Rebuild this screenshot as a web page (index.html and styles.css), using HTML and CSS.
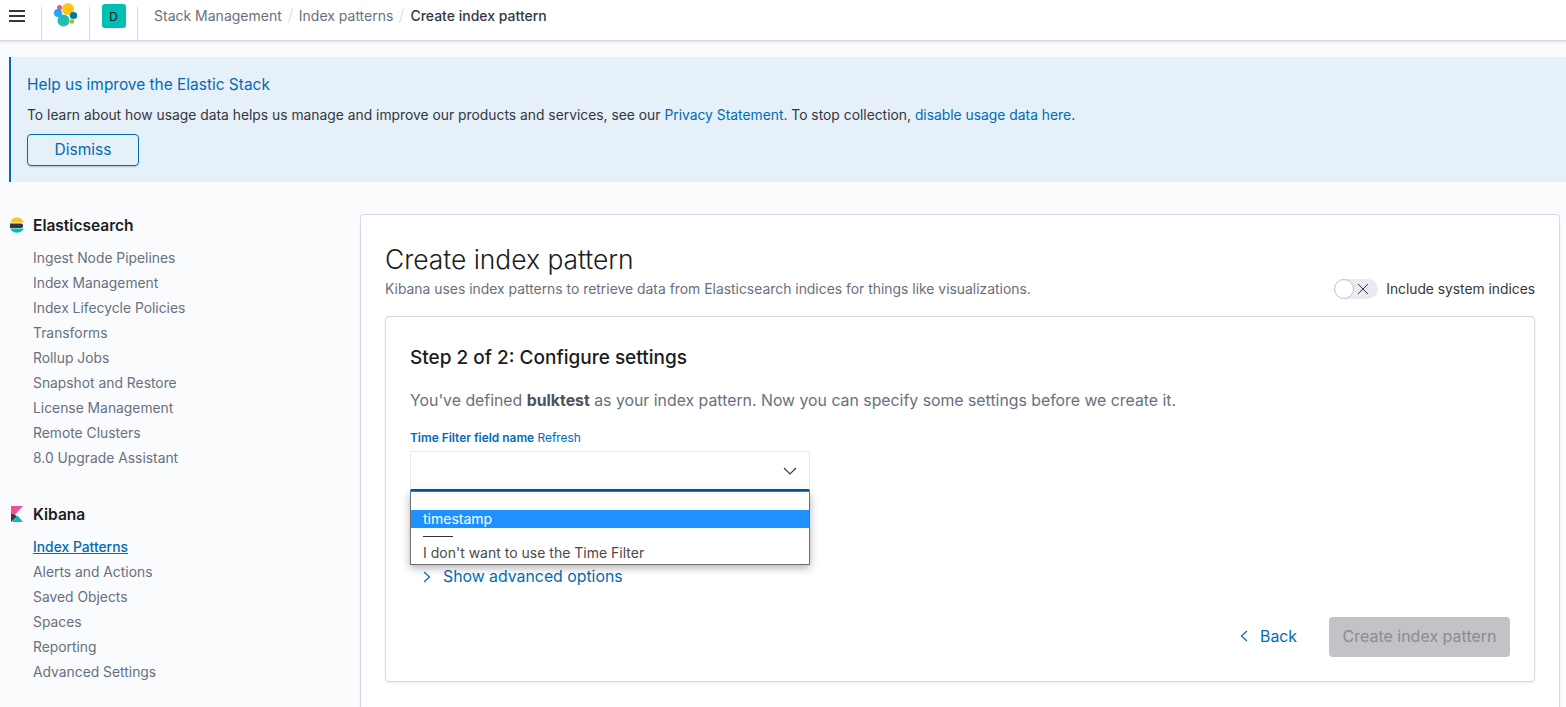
FILE: index.html

```html
<!DOCTYPE html>
<html lang="en">
<head>
    <meta charset="UTF-8">
    <title>Create index pattern - Kibana</title>
    <link rel="stylesheet" href="styles.css">
</head>
<body>
    <header class="topbar">
        <div class="topbar-cell menu-cell">
            <svg width="16" height="12" viewBox="0 0 16 12"><path d="M0 1h16M0 6h16M0 11h16" stroke="#343741" stroke-width="2"/></svg>
        </div>
        <div class="topbar-cell logo-cell">
            <svg width="26" height="26" viewBox="0 0 26 26">
                <circle cx="15" cy="7" r="6" fill="#fec514"/>
                <circle cx="10.500" cy="18.500" r="6" fill="#24bbb1"/>
                <ellipse cx="5" cy="11" rx="4" ry="4" fill="#1ba9f5"/>
                <ellipse cx="20.500" cy="13.500" rx="3.700" ry="3.500" fill="#0077a8"/>
                <circle cx="6.500" cy="5.500" r="2.500" fill="#f04e98"/>
                <circle cx="19" cy="19.500" r="2.300" fill="#93c90e"/>
            </svg>
        </div>
        <div class="topbar-cell space-cell"><span class="space-badge">D</span></div>
        <nav class="crumbs">
            <a>Stack Management</a><span class="crumb-sep"></span>
            <a>Index patterns</a><span class="crumb-sep"></span>
            <span class="crumb-current">Create index pattern</span>
        </nav>
    </header>

    <section class="callout">
        <h2>Help us improve the Elastic Stack</h2>
        <p>To learn about how usage data helps us manage and improve our products and services, see our <a>Privacy Statement</a>. To stop collection, <a>disable usage data here</a>.</p>
        <button class="btn-outline" type="button">Dismiss</button>
    </section>

    <div class="page">
        <aside class="sidenav">
            <h3 class="nav-title">
                <svg width="16" height="16" viewBox="0 0 16 16">
                    <path d="M1.500 5.500C2 2.500 5 .500 8 .500s6 2 6.500 5z" fill="#fec514"/>
                    <path d="M1 6.500h11a2.200 2.200 0 0 1 0 4.400H1z" fill="#343741"/>
                    <path d="M1.500 11.500h13C14 14 11 15.700 8 15.700s-6-1.700-6.500-4.200z" fill="#00bfb3"/>
                </svg>
                Elasticsearch
            </h3>
            <ul class="nav-list">
                <li>Ingest Node Pipelines</li>
                <li>Index Management</li>
                <li>Index Lifecycle Policies</li>
                <li>Transforms</li>
                <li>Rollup Jobs</li>
                <li>Snapshot and Restore</li>
                <li>License Management</li>
                <li>Remote Clusters</li>
                <li>8.0 Upgrade Assistant</li>
            </ul>
            <h3 class="nav-title">
                <svg width="16" height="16" viewBox="0 0 16 16">
                    <path d="M2 0h12L2 13z" fill="#f04e98"/>
                    <path d="M2 8c2.500 0 4.500 1 6 2.500L2 16z" fill="#343741"/>
                    <path d="M3 16 8.500 9.500 14 16z" fill="#00bfb3"/>
                </svg>
                Kibana
            </h3>
            <ul class="nav-list">
                <li class="active">Index Patterns</li>
                <li>Alerts and Actions</li>
                <li>Saved Objects</li>
                <li>Spaces</li>
                <li>Reporting</li>
                <li>Advanced Settings</li>
            </ul>
        </aside>

        <main class="panel">
            <div class="panel-head">
                <div>
                    <h1>Create index pattern</h1>
                    <p class="subtitle">Kibana uses index patterns to retrieve data from Elasticsearch indices for things like visualizations.</p>
                </div>
                <div class="switch-row">
                    <span class="switch">
                        <span class="switch-knob"></span>
                        <svg width="12" height="12" viewBox="0 0 12 12"><path d="M1 1l10 10M11 1 1 11" stroke="#343741" stroke-width="1"/></svg>
                    </span>
                    <span>Include system indices</span>
                </div>
            </div>

            <div class="card">
                <h2>Step 2 of 2: Configure settings</h2>
                <p class="lead">You've defined <b>bulktest</b> as your index pattern. Now you can specify some settings before we create it.</p>
                <div class="field-label"><b>Time Filter field name</b> <a>Refresh</a></div>
                <div class="select-wrap">
                    <div class="select">
                        <svg width="14" height="8" viewBox="0 0 14 8"><path d="M1 1l6 6 6-6" fill="none" stroke="#343741" stroke-width="1.100"/></svg>
                    </div>
                    <div class="dropdown">
                        <div class="opt-blank"></div>
                        <div class="opt selected">timestamp</div>
                        <div class="opt-divider"></div>
                        <div class="opt">I don't want to use the Time Filter</div>
                    </div>
                </div>
                <div class="advanced">
                    <svg width="8" height="12" viewBox="0 0 8 12"><path d="M1 1l5.500 5L1 11" fill="none" stroke="#006bb4" stroke-width="1.200"/></svg>
                    <a>Show advanced options</a>
                </div>
                <div class="actions">
                    <a class="back">
                        <svg width="8" height="12" viewBox="0 0 8 12"><path d="M7 1 1.500 6 7 11" fill="none" stroke="#006bb4" stroke-width="1.200"/></svg>
                        Back
                    </a>
                    <button class="btn-disabled" type="button" disabled>Create index pattern</button>
                </div>
            </div>
        </main>
    </div>
</body>
</html>
```

FILE: styles.css

```css
* {
    box-sizing: border-box;
}
html, body {
    height: 707px;
    overflow: hidden;
}
body {
    margin: 0;
    font-family: Inter, "Liberation Sans", sans-serif;
    font-size: 13.800px;
    color: #343741;
    background: #fafbfd;
}
a {
    color: #006bb4;
}
h1, h2, h3, p, ul {
    margin: 0;
    padding: 0;
}

/* top bar */
.topbar {
    height: 41px;
    display: flex;
    background: #fff;
    border-bottom: 1px solid #d3dae6;
    box-shadow: 0 1px 3px rgba(152, 162, 179, 0.3);
}
.topbar-cell {
    display: flex;
    justify-content: center;
}
.menu-cell {
    width: 41px;
    padding: 10px 0 0 9px;
    justify-content: flex-start;
    align-items: flex-start;
}
.logo-cell {
    width: 49px;
    padding-top: 2px;
    border-left: 1px solid #d3dae6;
    border-right: 1px solid #d3dae6;
    border-image: linear-gradient(to bottom, transparent 8px, #d3dae6 8px) 1;
    align-items: flex-start;
}
.space-cell {
    width: 48px;
    padding-top: 4px;
    border-right: 1px solid #d3dae6;
    border-image: linear-gradient(to bottom, transparent 8px, #d3dae6 8px) 1;
    align-items: flex-start;
}
.space-badge {
    width: 24px;
    height: 24px;
    border-radius: 3px;
    background: #00bfb3;
    color: #1a1c21;
    font-size: 12px;
    display: flex;
    align-items: center;
    justify-content: center;
}
.crumbs {
    display: flex;
    align-items: flex-start;
    padding: 7px 0 0 16px;
    font-size: 14px;
    line-height: 17px;
    color: #69707d;
}
.crumb-sep {
    width: 1px;
    height: 15px;
    margin: 1px 8px;
    background: #d3dae6;
    transform: rotate(15deg);
}
.crumb-current {
    color: #343741;
    font-weight: 500;
}
.crumbs a {
    color: #69707d;
}

/* usage data callout */
.callout {
    height: 125px;
    margin: 16px 0 0 9px;
    padding: 16px;
    background: #e6f0f8;
    border-left: 2px solid #006bb4;
}
.callout h2 {
    font-size: 15.450px;
    font-weight: 400;
    line-height: 24px;
    color: #006bb4;
}
.callout p {
    margin-top: 8px;
    font-size: 13.850px;
    line-height: 21px;
}
.btn-outline {
    display: block;
    width: 112px;
    height: 32px;
    margin-top: 8px;
    padding-bottom: 2px;
    border: 1px solid #006bb4;
    border-radius: 4px;
    background: transparent;
    color: #006bb4;
    font: 15.500px Inter, "Liberation Sans", sans-serif;
    box-shadow: 0 2px 2px -1px rgba(54, 97, 126, 0.3);
}

/* page layout */
.page {
    display: flex;
    align-items: flex-start;
    padding: 31px 6px 0 9px;
}
.sidenav {
    width: 351px;
    flex-shrink: 0;
    font-size: 13.850px;
}
.nav-title {
    display: flex;
    align-items: center;
    gap: 8px;
    height: 24px;
    font-size: 15.500px;
    font-weight: 600;
    color: #1a1c21;
}
.nav-list {
    list-style: none;
    margin: 9px 0 31px 24px;
    color: #69707d;
}
.nav-list li {
    height: 25px;
    line-height: 25px;
}
.nav-list .active {
    color: #006bb4;
    text-decoration: underline;
    font-weight: 500;
}

/* main panel */
.panel {
    flex: 1;
    height: 520px;
    margin-top: 1px;
    padding: 24px;
    background: #fff;
    border: 1px solid #d3dae6;
    border-radius: 4px;
    box-shadow: 0 1px 2px rgba(152, 162, 179, 0.15);
}
.panel-head {
    display: flex;
    justify-content: space-between;
    align-items: flex-end;
}
.panel h1 {
    font-size: 26.400px;
    font-weight: 300;
    line-height: 40px;
    color: #1a1c21;
}
.subtitle {
    margin-top: 1px;
    line-height: 18px;
    color: #69707d;
    font-size: 13.900px;
}
.switch-row {
    display: flex;
    align-items: center;
    gap: 8px;
    margin-bottom: -1px;
}
.switch {
    width: 44px;
    height: 20px;
    display: flex;
    align-items: center;
    justify-content: flex-end;
    padding-right: 9px;
    border-radius: 10px;
    background: #e9ebf0;
    position: relative;
}
.switch-knob {
    position: absolute;
    left: 0;
    top: 0;
    width: 20px;
    height: 20px;
    border-radius: 50%;
    background: #fff;
    border: 1px solid #c2c3c6;
}

/* step card */
.card {
    height: 366px;
    margin-top: 18px;
    padding: 25px 24px 24px;
    border: 1px solid #d3dae6;
    border-radius: 4px;
    box-shadow: 0 1px 2px rgba(152, 162, 179, 0.2);
}
.card h2 {
    font-size: 19px;
    font-weight: 500;
    line-height: 32px;
    color: #1a1c21;
}
.lead {
    margin-top: 15px;
    font-size: 15.830px;
    line-height: 24px;
    color: #69707d;
}
.lead b {
    font-weight: 700;
    color: #4e525c;
}
.field-label {
    margin-top: 17px;
    font-size: 11.900px;
    line-height: 16px;
}
.field-label b {
    color: #006bb4;
    font-weight: 600;
}
.select-wrap {
    width: 400px;
    margin-top: 5px;
    position: relative;
}
.select {
    height: 40px;
    display: flex;
    align-items: center;
    justify-content: flex-end;
    padding-right: 12px;
    background: #fff;
    border: 1px solid #e8eaf0;
    border-bottom: 2px solid #005a9e;
}
.dropdown {
    position: absolute;
    left: 0;
    right: 0;
    top: 40px;
    height: 74px;
    background: #fff;
    border: 1px solid #6e6e6e;
    box-shadow: 0 3px 8px rgba(0, 0, 0, 0.3);
    color: #4a4a4a;
    font-size: 14px;
}
.opt-blank {
    height: 18px;
}
.opt {
    height: 18px;
    line-height: 18px;
    padding-left: 12px;
}
.opt.selected {
    line-height: 17px;
    background: #1e90ff;
    color: #fff;
}
.opt-divider {
    width: 30px;
    height: 1px;
    margin: 8px 0 7px 12px;
    background: #333;
}
.advanced {
    display: flex;
    align-items: center;
    gap: 12px;
    margin-top: 74px;
    padding-left: 13px;
    font-size: 15.830px;
    line-height: 24px;
}
.actions {
    display: flex;
    justify-content: flex-end;
    align-items: center;
    gap: 32px;
    margin-top: 28px;
}
.back {
    display: flex;
    align-items: center;
    gap: 12px;
    padding-bottom: 2px;
    font-size: 15.800px;
}
.btn-disabled {
    width: 181px;
    height: 40px;
    padding-bottom: 4px;
    border: 0;
    border-radius: 4px;
    background: #c2c3c6;
    color: #8b8c8f;
    font: 16px Inter, "Liberation Sans", sans-serif;
}
```
